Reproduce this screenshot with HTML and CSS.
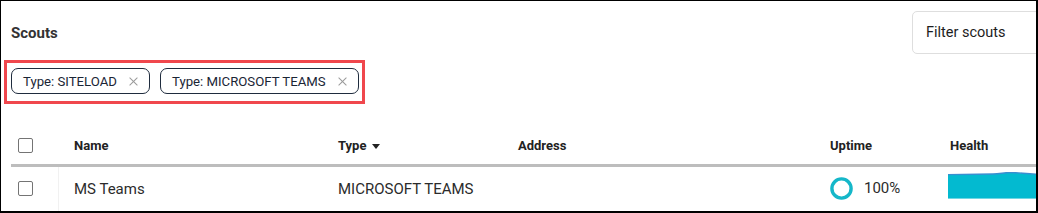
FILE: index.html
```html
<!DOCTYPE html>
<html>
<head>
<meta charset="utf-8">
<link rel="stylesheet" href="styles.css">
</head>
<body>
<div class="frame">
  <div class="toolbar">
    <div class="title">Scouts</div>
    <div class="filter">Filter scouts</div>
  </div>
  <div class="chips-box">
    <span class="chip">Type: SITELOAD<span class="chip-x"></span></span>
    <span class="chip">Type: MICROSOFT TEAMS<span class="chip-x"></span></span>
  </div>
  <div class="table">
    <div class="head">
      <div class="cell cb-cell"><span class="checkbox"></span></div>
      <div class="cell">Name</div>
      <div class="cell">Type<span class="sort"></span></div>
      <div class="cell">Address</div>
      <div class="cell">Uptime</div>
      <div class="cell">Health</div>
    </div>
    <div class="row">
      <div class="cell cb-cell sep"><span class="checkbox"></span></div>
      <div class="cell">MS Teams</div>
      <div class="cell">MICROSOFT TEAMS</div>
      <div class="cell"></div>
      <div class="cell uptime">
        <svg class="ring" width="23" height="23" viewBox="0 0 23 23"><circle cx="11.5" cy="11.5" r="9.6" fill="none" stroke="#15b7c9" stroke-width="3.4"/></svg>
        <span>100%</span>
      </div>
      <div class="cell health">
        <svg width="110" height="28" viewBox="0 0 110 28" preserveAspectRatio="none">
          <path d="M0 2.6 C15 2.3 30 2.2 45 2 C52 1.9 56 0.5 62 0.5 C70 0.5 78 1.8 90 2.2 L110 2.6 L110 27 L0 27 Z" fill="#03bad0"/>
          <path d="M0 2.6 C15 2.3 30 2.2 45 2 C52 1.9 56 0.5 62 0.5 C70 0.5 78 1.8 90 2.2 L110 2.6" fill="none" stroke="#3a8fd0" stroke-width="1.4"/>
          <rect x="0" y="26" width="110" height="1" fill="#6fd6e3"/>
        </svg>
      </div>
    </div>
  </div>
</div>
</body>
</html>
```
FILE: styles.css
```css
html, body {
  margin: 0;
  padding: 0;
  background: #fff;
}
.frame {
  width: 1038px;
  height: 213px;
  box-sizing: border-box;
  border-style: solid;
  border-color: #000;
  border-width: 1px 2px 2px 1px;
  overflow: hidden;
  font-family: Roboto, "Liberation Sans", sans-serif;
  color: #222;
}
.toolbar {
  display: grid;
  grid-template-columns: 901px 220px;
  align-items: center;
  padding: 10px 0 0 10px;
}
.title {
  font-size: 15px;
  font-weight: 700;
  color: #333;
}
.filter {
  height: 43px;
  box-sizing: border-box;
  border: 1px solid #dedede;
  border-radius: 5px;
  display: flex;
  align-items: center;
  padding-left: 13px;
  font-size: 14.5px;
  color: #1d1d1d;
}
.chips-box {
  margin: 6px 0 0 3px;
  width: 361px;
  height: 44px;
  box-sizing: border-box;
  border: 3px solid #f0474d;
  padding: 5px 4px 0 4px;
  display: flex;
  gap: 10px;
}
.chip {
  height: 26px;
  box-sizing: border-box;
  border: 1px solid #1f2c3e;
  border-radius: 7px;
  display: inline-flex;
  align-items: center;
  padding: 0 11px 0 11px;
  font-size: 13.2px;
  color: #1a2535;
  white-space: nowrap;
}
.chip-x {
  position: relative;
  width: 9px;
  height: 9px;
  margin-left: 12px;
}
.chip-x::before, .chip-x::after {
  content: "";
  position: absolute;
  left: -1px;
  top: 4px;
  width: 11px;
  height: 1px;
  background: #9a9a9a;
  transform: rotate(45deg);
}
.chip-x::after {
  transform: rotate(-45deg);
}
.table {
  margin: 22px 0 0 10px;
}
.head, .row {
  display: grid;
  grid-template-columns: 48px 264px 180px 312px 120px 200px;
}
.head {
  height: 38px;
  border-bottom: 3px solid #bdbdbd;
  font-size: 13px;
  font-weight: 700;
  color: #222;
}
.row {
  height: 44px;
  font-size: 15px;
  color: #2b2b2b;
}
.cell {
  display: flex;
  align-items: center;
  padding-left: 15px;
  white-space: nowrap;
}
.cb-cell {
  padding-left: 7px;
}
.sep {
  border-right: 1px solid #f1f1f1;
}
.checkbox {
  width: 15px;
  height: 15px;
  box-sizing: border-box;
  border: 1.5px solid #747474;
  border-radius: 2px;
}
.row .checkbox {
  margin-top: -1px;
}
.sort {
  width: 0;
  height: 0;
  border-left: 4.5px solid transparent;
  border-right: 4.5px solid transparent;
  border-top: 5px solid #222;
  margin-left: 6px;
  margin-top: 2px;
}
.uptime {
  gap: 11px;
  margin-top: -2px;
}
.ring {
  display: block;
}
.health {
  padding-left: 13px;
  align-items: flex-start;
  padding-top: 5px;
}
.health svg {
  display: block;
}
```
